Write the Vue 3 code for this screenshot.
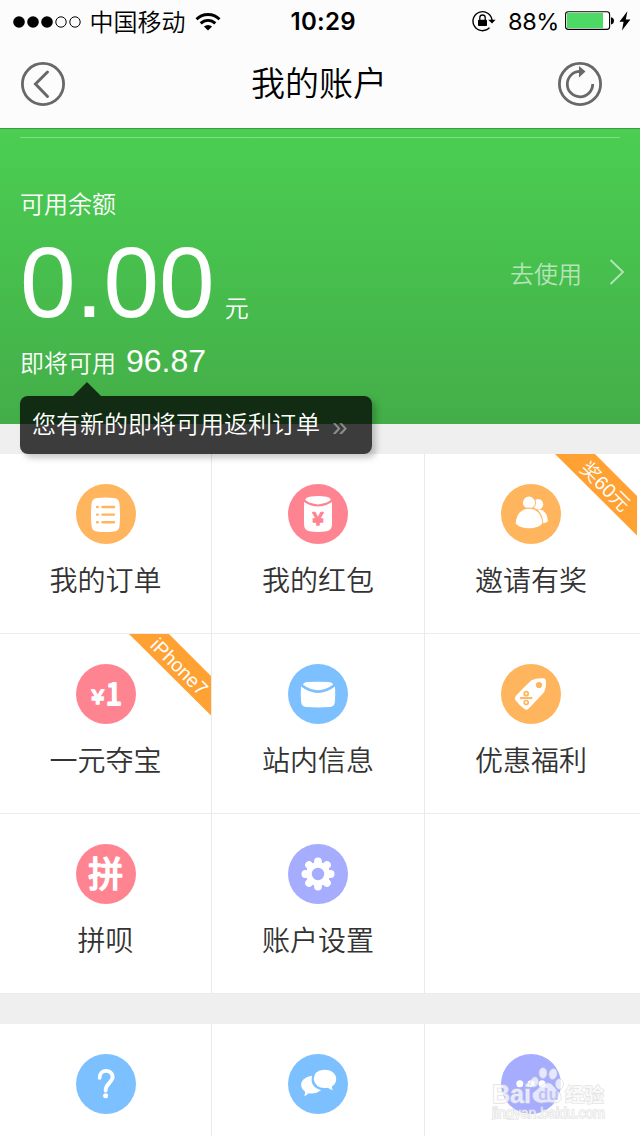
<script setup>
const cells = [
  { icon: 'order', color: '#ffb55d', label: '我的订单' },
  { icon: 'packet', color: '#ff8492', label: '我的红包' },
  { icon: 'friends', color: '#ffb55d', label: '邀请有奖', ribbon: '奖60元' },
  { icon: 'yuan', color: '#ff8492', label: '一元夺宝', ribbon: 'iPhone7' },
  { icon: 'mail', color: '#7dc0ff', label: '站内信息' },
  { icon: 'tag', color: '#ffb55d', label: '优惠福利' },
  { icon: 'pin', color: '#ff8492', label: '拼呗' },
  { icon: 'gear', color: '#a6adff', label: '账户设置' },
  { icon: '', color: '', label: '' },
  { icon: 'help', color: '#7dc0ff', label: '' },
  { icon: 'chat', color: '#7dc0ff', label: '' },
  { icon: 'more', color: '#a6adff', label: '' }
]
const groups = [cells.slice(0, 9), cells.slice(9)]
const petals = [0, 45, 90, 135, 180, 225, 270, 315]
</script>

<template>
  <div class="screen">
    <div class="status">
      <div class="status-left">
        <svg class="signal" width="68" height="14" viewBox="0 0 68 14">
          <circle cx="6" cy="7" r="5.8" /><circle cx="20" cy="7" r="5.8" /><circle cx="34" cy="7" r="5.8" />
          <g fill="none" stroke="#000" stroke-width="1"><circle cx="48" cy="7" r="5.2" /><circle cx="62" cy="7" r="5.2" /></g>
        </svg>
        <span class="carrier">中国移动</span>
        <svg class="wifi" width="26" height="20" viewBox="0 0 26 20">
          <g fill="none" stroke="#000" stroke-width="2.9">
            <path d="M1.5 7.2a16.4 16.4 0 0 1 23 0" /><path d="M5.7 11.4a10.4 10.4 0 0 1 14.6 0" />
          </g>
          <path d="M8.9 14.6a5.8 5.8 0 0 1 8.2 0L13 18.6z" />
        </svg>
      </div>
      <span class="time">10:29</span>
      <div class="status-right">
        <svg class="lock" width="24" height="22" viewBox="0 0 24 22">
          <path d="M17.5 17.6A9.5 9.5 0 1 1 20 11" fill="none" stroke="#000" stroke-width="1.4" />
          <path d="M16.2 9.8h7.4L20 13.6z" />
          <rect x="6" y="9.7" width="9" height="6.4" rx=".8" />
          <path d="M7.8 10V7.7a2.7 2.7 0 0 1 5.4 0V10" fill="none" stroke="#000" stroke-width="1.3" />
        </svg>
        <span class="percent">88%</span>
        <svg class="battery" width="50" height="20" viewBox="0 0 50 20">
          <rect x=".6" y=".8" width="44" height="17.6" rx="2.6" fill="#fff" stroke="#000" stroke-width="1.1" />
          <rect x="2" y="2" width="36" height="15" fill="#4cd964" />
          <path d="M46 6.2q3 .6 3 3.6t-3 3.6z" />
        </svg>
        <svg class="bolt" width="12" height="20" viewBox="0 0 12 20"><path d="M8.4.3L.4 10.8h4.2L3 19.4l8.4-11H6.8z" /></svg>
      </div>
    </div>

    <div class="nav">
      <svg width="44" height="44" viewBox="0 0 44 44" fill="none" stroke="#686868">
        <circle cx="22" cy="22" r="20.6" stroke-width="2.8" />
        <path d="M26.5 10L14.5 22l12 12.5" stroke-width="3" stroke-linecap="round" />
      </svg>
      <h1>我的账户</h1>
      <svg width="44" height="44" viewBox="0 0 44 44" fill="none" stroke="#686868">
        <circle cx="22" cy="22" r="20.6" stroke-width="2.8" />
        <path d="M34.7 22A12.7 12.7 0 1 1 22 9.4" stroke-width="2.8" />
        <path d="M21 4l6.5 5.6L21 15.5z" fill="#686868" stroke="none" />
      </svg>
    </div>

    <section class="balance">
      <div class="rule"></div>
      <div class="caption">可用余额</div>
      <div class="amount-row">
        <div class="amount"><strong>0.00</strong><span>元</span></div>
        <div class="use"><span>去使用</span>
          <svg width="16" height="28" viewBox="0 0 16 28"><path d="M1.5 2L14 14 1.5 26" fill="none" stroke="currentColor" stroke-width="1.8" /></svg>
        </div>
      </div>
      <div class="pending"><span>即将可用</span><b>96.87</b></div>
      <div class="tip"><span>您有新的即将可用返利订单</span><i>»</i></div>
    </section>

    <section v-for="(group, g) in groups" :key="g" class="grid">
      <div v-for="(c, n) in group" :key="n" class="cell">
        <svg v-if="c.icon" class="icon" viewBox="0 0 60 60" fill="#fff">
          <circle cx="30" cy="30" r="30" :fill="c.color" />
          <g v-if="c.icon === 'order'">
            <path d="M21 14Q29.5 12.8 38 14 43 14.5 43.5 20 44.5 31 43.5 42 43 47 38 47.6 29.5 48.6 21 47.6 16 47 15.5 42 14.5 31 15.5 20 16 14.5 21 14z" />
            <g :stroke="c.color" stroke-width="2.4" stroke-linecap="round">
              <path d="M26.5 23H38M26.5 30.6H38M26.5 38.3H38M21.1 23h.6M21.1 30.6h.6M21.1 38.3h.6" />
            </g>
          </g>
          <g v-else-if="c.icon === 'packet'">
            <path d="M16 18Q30 27 44 18V40Q44 46.5 38.5 47.2 30 48.6 21.5 47.2 16 46.5 16 40z" />
            <path d="M17.2 15.5Q18 13.5 21.5 12.8 30 11.4 38.5 12.8 42 13.5 42.8 15.5 41 19 30 20.4 19 19 17.2 15.5z" />
            <text x="30" y="41" class="yen" font-size="18" :fill="c.color" :stroke="c.color" textLength="11" lengthAdjust="spacingAndGlyphs">¥</text>
          </g>
          <g v-else-if="c.icon === 'friends'">
            <circle cx="37" cy="20.3" r="5.2" />
            <path d="M37 25Q46.5 26.5 47 37.2 45 39 41 39.4z" />
            <circle cx="28" cy="18.7" r="7" :fill="c.color" /><circle cx="28" cy="18.7" r="6.1" />
            <path d="M14.6 39.5C15.5 29 21 24.7 28 24.7S40.5 29 41.4 39.5Q37 44.3 28 44.3T14.6 39.5z" :stroke="c.color" stroke-width="2.2" paint-order="stroke" />
          </g>
          <g v-else-if="c.icon === 'yuan'">
            <text x="21.8" y="40.2" class="yen white" font-size="20" textLength="13" lengthAdjust="spacingAndGlyphs">¥</text>
            <text x="37.8" y="41" class="one white" font-size="31" textLength="16" lengthAdjust="spacingAndGlyphs">1</text>
          </g>
          <g v-else-if="c.icon === 'mail'">
            <path d="M13 22.5Q30 35.5 47 22.5 47.6 31 46.8 38.5 46.3 42.5 42 43 30 43.8 18 43 13.7 42.5 13.2 38.5 12.4 31 13 22.5z" />
            <path d="M14.8 20.6Q16 18.4 19 18.1 30 17.3 41 18.1 44 18.4 45.2 20.6 30 32 14.8 20.6z" />
          </g>
          <g v-else-if="c.icon === 'tag'">
            <path d="M30.5 16.2Q35 13.9 42 14.2 44.9 14.4 45 17 45.3 23 43.8 26.5 43.4 28 41.5 30L27.5 44.8Q25.7 46.6 23.5 45 18 41 14.4 36 13.2 34 15 31.8 22 24 30.5 16.2z" />
            <circle cx="38" cy="21" r="3.1" :fill="c.color" />
            <g fill="none" :stroke="c.color" stroke-width="1.7"><path d="M19 34.1H31.3" stroke-width="2" /><circle cx="25.2" cy="29.7" r="2" /><circle cx="25.2" cy="38.5" r="2" /></g>
          </g>
          <text v-else-if="c.icon === 'pin'" x="29.7" y="42.8" class="pin white" font-size="35">拼</text>
          <g v-else-if="c.icon === 'gear'">
            <circle cx="30" cy="30" r="12" />
            <circle v-for="a in petals" :key="a" cx="30" cy="17.4" r="3.9" :transform="`rotate(${a} 30 30)`" />
            <circle cx="30" cy="30" r="6.2" :fill="c.color" />
          </g>
          <g v-else-if="c.icon === 'help'">
            <path d="M23.6 23.8C23.6 14.6 36.6 15 36.6 23 36.6 28.5 29.6 29.5 29.6 36.5" fill="none" stroke="#fff" stroke-width="3.8" stroke-linecap="round" />
            <circle cx="29.6" cy="41.7" r="2.5" />
          </g>
          <g v-else-if="c.icon === 'chat'">
            <path d="M24 21.8C12 24 10.5 32.5 17 37.6Q17.2 40 16.2 42.2 19 41.2 20.6 39.2 27 40.6 33.2 36.2 21.5 33 24 21.8z" />
            <path d="M36.3 15.8c14 0 14.5 13.5 7.5 16.6Q43.9 34.6 45 36.2 42 35.6 39.8 33.7 28 35.5 25.7 25.5 25.5 16.5 36.3 15.8z" />
          </g>
          <g v-else-if="c.icon === 'more'"><circle cx="18.8" cy="29.7" r="3.5" /><circle cx="29.9" cy="29.7" r="3.5" /><circle cx="41" cy="29.7" r="3.5" /></g>
        </svg>
        <span v-if="c.label" class="label">{{ c.label }}</span>
        <svg v-if="c.ribbon" class="ribbon" width="82" height="82" viewBox="0 0 82 82">
          <path d="M0 0H40L82 42V81.5z" fill="#ffa233" />
          <text x="50.5" y="39.5" transform="rotate(45 50.5 32.5)">{{ c.ribbon }}</text>
        </svg>
      </div>
    </section>

    <svg class="watermark" width="120" height="60" viewBox="0 0 120 60">
      <g fill="#fff" fill-opacity=".72" stroke="#d5d5d5" stroke-opacity=".65" stroke-width="1">
        <ellipse cx="43.5" cy="22" rx="3.7" ry="5" transform="rotate(15 43.5 22)" />
        <ellipse cx="52" cy="13" rx="3.9" ry="5.3" />
        <ellipse cx="62" cy="14" rx="3.9" ry="5.3" transform="rotate(12 62 14)" />
        <ellipse cx="68.5" cy="24" rx="4" ry="5.2" />
        <path d="M56 23Q60 22.5 63 27T69 33Q73 41 65 43 57 41 50 43 40 41 42 33 46 30 49 27T56 23z" />
      </g>
      <g class="wm">
        <text x="1" y="43" font-size="25" font-weight="700" textLength="39" lengthAdjust="spacingAndGlyphs">Bai</text>
        <text x="47" y="40" font-size="17" font-weight="700" class="du">du</text>
        <text x="74" y="42" font-size="19.5" font-weight="700">经验</text>
        <text x="1" y="58" font-size="14" textLength="113" lengthAdjust="spacingAndGlyphs">jingyan.baidu.com</text>
      </g>
    </svg>
  </div>
</template>

<style>
body { background: #efefef; }
</style>

<style scoped>
.screen { position: relative; width: 640px; height: 1136px; overflow: hidden; background: #efefef; color: #000; font-family: "Liberation Sans", "Noto Sans CJK SC", sans-serif; font-weight: 350; }
svg { display: block; flex: none; }
.status { display: grid; grid-template-columns: 1fr auto 1fr; align-items: center; height: 40px; padding: 0 9px 0 12.5px; background: #fcfcfc; }
.status-left, .status-right { display: flex; align-items: center; }
.status-right { justify-content: flex-end; }
.status-left { padding-top: 1px; }
.carrier { margin-left: 9px; padding-top: 3px; font-size: 24px; line-height: 36px; }
.wifi { margin-left: 9px; }
.time { padding: 2px 0 0 3px; font: 600 24px/40px Inter, sans-serif; letter-spacing: .3px; }
.percent { margin: 0 6px 0 12px; padding-top: 2px; font: 400 23.5px/40px Inter, sans-serif; letter-spacing: -.4px; }
.bolt { margin-left: 4px; }
.nav { display: flex; align-items: center; justify-content: space-between; height: 88px; padding: 0 38px 0 21px; background: #fcfcfc; box-sizing: border-box; }
.nav h1 { margin: 0; padding-left: 15px; font-size: 34px; line-height: 50px; font-weight: 350; }
.balance { position: relative; box-sizing: border-box; height: 296px; padding: 0 15px 0 20px; border-top: 1px solid #3a9a3f; background: linear-gradient(#4bce52, #43ae48); color: #fff; }
.rule { height: 1px; margin: 8px 5px 0 0; background: #82dd86; }
.caption { margin-top: 49px; font-size: 24px; line-height: 36px; }
.amount-row { display: flex; justify-content: space-between; height: 100px; }
.amount { display: flex; align-items: baseline; margin-top: 9px; line-height: 100px; }
.amount strong { font-size: 100px; font-weight: 400; }
.amount span { margin-left: 10px; font-size: 24px; }
.use { display: flex; align-items: center; gap: 27px; height: 98px; color: rgba(255, 255, 255, .6); font-size: 24px; }
.pending { display: flex; align-items: baseline; margin-top: 18px; font-size: 24px; line-height: 40px; }
.pending b { margin-left: 10px; font-size: 32px; font-weight: 400; }
.tip { position: absolute; z-index: 2; left: 20px; top: 267px; display: flex; align-items: center; width: 352px; height: 58px; box-sizing: border-box; padding-left: 12px; border-radius: 8px; background: rgba(0, 0, 0, .75); box-shadow: 4px 4px 6px rgba(0, 0, 0, .22); font-size: 24px; line-height: 36px; }
.tip i { margin-left: 12px; padding-top: 3px; color: #8b918c; font-size: 28px; font-style: normal; }
.tip::before { content: ""; position: absolute; left: 53px; top: -14px; border: 14px solid transparent; border-top: 0; border-bottom-color: rgba(0, 0, 0, .75); }
.grid { display: grid; grid-template-columns: 212px 213px 215px; grid-auto-rows: 180px; margin-top: 30px; }
.cell { position: relative; box-sizing: border-box; padding-top: 30px; border-right: 1px solid #e9e9e9; border-bottom: 1px solid #ececec; background: #fff; display: flex; flex-direction: column; align-items: center; }
.cell:nth-child(3n) { border-right: 0; padding-right: 3px; }
.icon { width: 60px; height: 60px; }
.label { margin-top: 17px; color: #333; font-size: 28px; line-height: 42px; }
.ribbon { position: absolute; top: 0; right: 0; }
.cell:nth-child(3n) .ribbon { right: 3px; }
.ribbon text { fill: #fff; font-size: 19.5px; text-anchor: middle; }
.yen, .one, .pin { font-family: "Noto Sans CJK SC", sans-serif; text-anchor: middle; stroke-width: 1.6; stroke-linejoin: round; font-weight: 400; }
.one { stroke-width: 2.2; }
.pin { stroke-width: 1.7; }
.white { fill: #fff; stroke: #fff; }
.watermark { position: absolute; left: 491px; top: 1060px; }
.wm text { fill: #fff; fill-opacity: .72; stroke: #d2d2d2; stroke-opacity: .6; stroke-width: 1.4; paint-order: stroke; }
.wm .du { fill: #b0b4ee; stroke: none; }
</style>
